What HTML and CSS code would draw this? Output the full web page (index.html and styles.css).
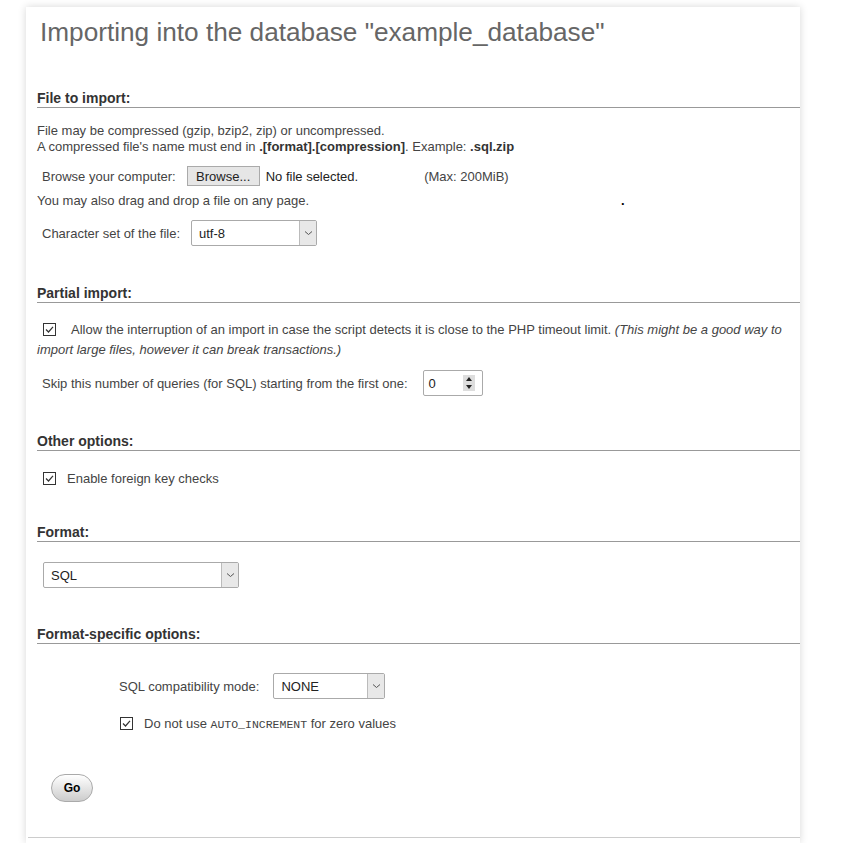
FILE: index.html
```html
<!DOCTYPE html>
<html>
<head>
<meta charset="utf-8">
<link rel="stylesheet" href="styles.css">
</head>
<body>
<div class="page">
  <h2 class="title">Importing into the database "example_database"</h2>

  <section class="sec sec-file">
    <h3 class="head">File to import:</h3>
    <p class="para">File may be compressed (gzip, bzip2, zip) or uncompressed.<br>A compressed file's name must end in <b>.[format].[compression]</b>. Example: <b>.sql.zip</b></p>
    <div class="row row-browse">
      <span class="lbl">Browse your computer:</span>
      <span class="btn-file">Browse...</span>
      <span class="nofile">No file selected.</span>
      <span class="max">(Max: 200MiB)</span>
    </div>
    <div class="row row-drag">
      <span>You may also drag and drop a file on any page.</span>
      <span class="dot">.</span>
    </div>
    <div class="row row-charset">
      <span class="lbl">Character set of the file:</span>
      <span class="select sel-charset"><span class="sel-val">utf-8</span><span class="sel-arrow"><svg width="9" height="6" viewBox="0 0 9 6"><path d="M1 1.5 L4.5 4.5 L8 1.5" fill="none" stroke="#555" stroke-width="1"/></svg></span></span>
    </div>
  </section>

  <section class="sec sec-partial">
    <h3 class="head">Partial import:</h3>
    <p class="para para-check"><span class="cb"><svg width="13" height="13" viewBox="0 0 13 13"><rect x="0.5" y="0.5" width="12" height="12" fill="#fff" stroke="#333"/><path d="M3 6.5 L5.5 9 L10 3.8" fill="none" stroke="#333" stroke-width="1.2"/></svg></span><span class="cbtext">Allow the interruption of an import in case the script detects it is close to the PHP timeout limit. <i>(This might be a good way to import large files, however it can break transactions.)</i></span></p>
    <div class="row row-skip">
      <span class="lbl">Skip this number of queries (for SQL) starting from the first one:</span>
      <span class="num"><span class="num-val">0</span><span class="spin"><span class="spin-up"></span><span class="spin-down"></span></span></span>
    </div>
  </section>

  <section class="sec sec-other">
    <h3 class="head">Other options:</h3>
    <div class="row row-fk">
      <span class="cb"><svg width="13" height="13" viewBox="0 0 13 13"><rect x="0.5" y="0.5" width="12" height="12" fill="#fff" stroke="#333"/><path d="M3 6.5 L5.5 9 L10 3.8" fill="none" stroke="#333" stroke-width="1.2"/></svg></span>
      <span class="fktext">Enable foreign key checks</span>
    </div>
  </section>

  <section class="sec sec-format">
    <h3 class="head">Format:</h3>
    <div class="row row-format">
      <span class="select sel-format"><span class="sel-val">SQL</span><span class="sel-arrow"><svg width="9" height="6" viewBox="0 0 9 6"><path d="M1 1.5 L4.5 4.5 L8 1.5" fill="none" stroke="#555" stroke-width="1"/></svg></span></span>
    </div>
  </section>

  <section class="sec sec-specific">
    <h3 class="head">Format-specific options:</h3>
    <div class="opts">
      <div class="row row-compat">
        <span class="lbl">SQL compatibility mode:</span>
        <span class="select sel-compat"><span class="sel-val">NONE</span><span class="sel-arrow"><svg width="9" height="6" viewBox="0 0 9 6"><path d="M1 1.5 L4.5 4.5 L8 1.5" fill="none" stroke="#555" stroke-width="1"/></svg></span></span>
      </div>
      <div class="row row-auto">
        <span class="cb"><svg width="13" height="13" viewBox="0 0 13 13"><rect x="0.5" y="0.5" width="12" height="12" fill="#fff" stroke="#333"/><path d="M3 6.5 L5.5 9 L10 3.8" fill="none" stroke="#333" stroke-width="1.2"/></svg></span>
        <span class="autotext">Do not use <code>AUTO_INCREMENT</code> for zero values</span>
      </div>
    </div>
  </section>

  <div class="actions">
    <span class="go">Go</span>
  </div>
</div>
</body>
</html>
```

FILE: styles.css
```css
html, body {
  margin: 0;
  padding: 0;
  background: #fff;
}
body {
  font-family: "Liberation Sans", Arial, sans-serif;
  font-size: 13px;
  color: #444;
}
.page {
  margin: 7px 0 0 26px;
  width: 774px;
  height: 836px;
  box-sizing: border-box;
  background: #fff;
  box-shadow: 0 0 8px rgba(0,0,0,0.16);
  padding: 0 0 0 11px;
}
.title {
  margin: 0;
  padding: 10px 0 0 3px;
  font-size: 26.2px;
  font-weight: normal;
  color: #666;
  line-height: 30px;
  height: 73px;
}
.head {
  margin: 0;
  font-size: 14px;
  font-weight: bold;
  color: #333;
  line-height: 16px;
  padding-bottom: 1px;
  border-bottom: 1px solid #999;
}
.para {
  margin: 15px 0 0 0;
  line-height: 16px;
}
.para b { color: #333; }
.row {
  display: flex;
  align-items: center;
}
.lbl { margin-left: 5px; }
.row-browse {
  margin-top: 10px;
  height: 22px;
}
.btn-file {
  margin-left: 11px;
  box-sizing: border-box;
  height: 20px;
  width: 73px;
  border: 1px solid #aaa;
  background: #e6e6e6;
  color: #222;
  display: flex;
  align-items: center;
  justify-content: center;
}
.nofile { margin-left: 6px; color: #222; }
.max { margin-left: 66px; }
.row-drag { margin-top: 5px; height: 16px; }
.dot { margin-left: 312px; color: #000; font-weight: bold; }
.row-charset { margin-top: 12px; height: 26px; }
.select {
  box-sizing: border-box;
  display: flex;
  align-items: stretch;
  height: 26px;
  border: 1px solid #aaa;
  border-radius: 2px;
  background: #fff;
  color: #222;
}
.sel-val {
  flex: 1;
  display: flex;
  align-items: center;
  padding-left: 7px;
}
.sel-arrow {
  width: 16px;
  border-left: 1px solid #bbb;
  background: #e8e8e8;
  display: flex;
  align-items: center;
  justify-content: center;
}
.sel-charset { margin-left: 11px; width: 126px; }
.sec-partial { margin-top: 39px; }
.para-check { margin-top: 17px; line-height: 20px; }
.cb { display: inline-flex; margin-left: 6px; vertical-align: -2px; }
.cbtext { margin-left: 15px; }
.cbtext i { color: #444; }
.row-skip { margin-top: 10px; height: 26px; }
.num {
  margin-left: 15px;
  box-sizing: border-box;
  width: 60px;
  height: 26px;
  border: 1px solid #aaa;
  border-radius: 2px;
  display: flex;
  align-items: center;
  color: #222;
}
.num-val { flex: 1; padding-left: 5px; }
.spin {
  width: 12px;
  height: 16px;
  margin-right: 7px;
  background: #ddd;
  display: flex;
  flex-direction: column;
  justify-content: space-around;
  align-items: center;
}
.spin-up, .spin-down {
  width: 0; height: 0;
  border-left: 3px solid transparent;
  border-right: 3px solid transparent;
}
.spin-up { border-bottom: 4px solid #222; }
.spin-down { border-top: 4px solid #222; }
.sec-other { margin-top: 37px; }
.row-fk { margin-top: 20px; height: 14px; }
.row-fk .cb, .row-auto .cb { margin-left: 6px; }
.fktext { margin-left: 11px; }
.sec-format { margin-top: 39px; }
.row-format { margin-top: 20px; }
.sel-format { margin-left: 6px; width: 196px; height: 26px; }
.sec-specific { margin-top: 38px; }
.opts { padding-left: 82px; }
.row-compat { margin-top: 29px; height: 26px; }
.row-compat .lbl { margin-left: 0; }
.sel-compat { margin-left: 14px; width: 112px; }
.row-auto { margin-top: 17px; height: 14px; }
.row-auto .cb { margin-left: 1px; }
.autotext { margin-left: 11px; }
code {
  font-family: "Liberation Mono", "Courier New", monospace;
  font-size: 11.5px;
  color: #444;
}
.actions {
  margin-top: 44px;
  height: 63px;
  border-bottom: 1px solid #ccc;
  margin-left: -9px;
  padding-left: 23px;
}
.go {
  box-sizing: border-box;
  display: inline-flex;
  align-items: center;
  justify-content: center;
  width: 42px;
  height: 28px;
  border: 1px solid #aaa;
  border-radius: 14px;
  background: linear-gradient(#fff, #ccc);
  font-weight: bold;
  color: #000;
  font-size: 12px;
}
```
